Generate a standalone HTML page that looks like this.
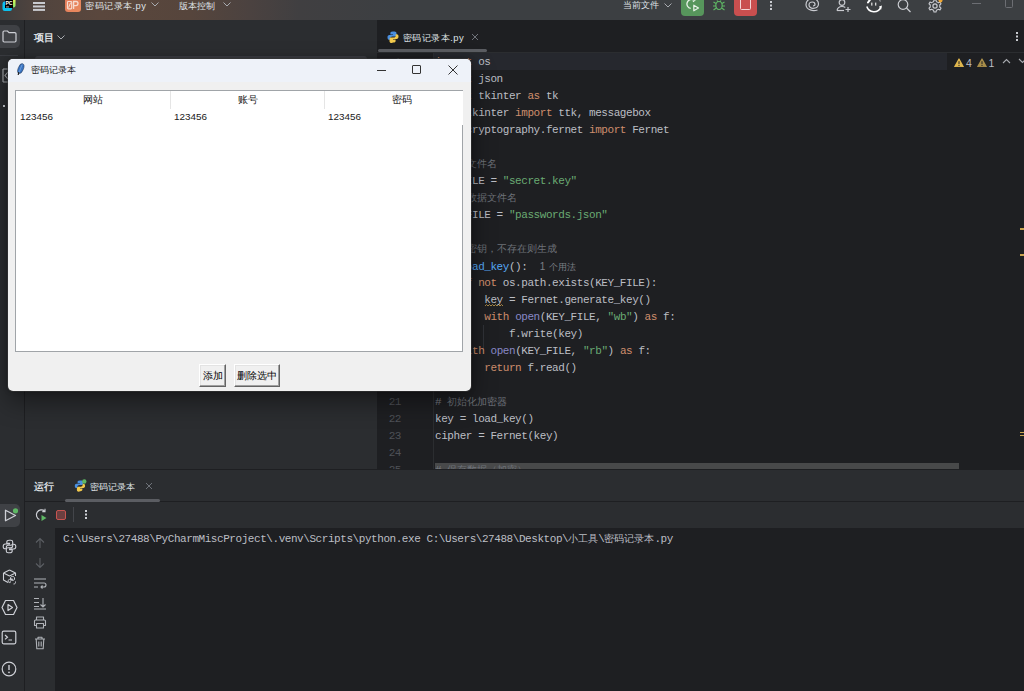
<!DOCTYPE html>
<html><head><meta charset="utf-8">
<style>
*{box-sizing:border-box;margin:0;padding:0}
html,body{width:1024px;height:691px;overflow:hidden;background:#1e1f22;font-family:"Liberation Sans",sans-serif;}
.a{position:absolute}
#title{left:0;top:0;width:1024px;height:20px;background:linear-gradient(90deg,#3e3d3e 0px,#50443e 35px,#5a473d 100px,#56453c 190px,#4b4240 250px,#403f41 300px,#3c3f42 400px);}
#lstrip{left:0;top:20px;width:25px;height:671px;background:#2b2d30;border-right:1px solid #1e1f22}
#proj{left:25px;top:20px;width:352px;height:449px;background:#2b2d30;}
#editor{left:377px;top:20px;width:647px;height:449px;background:#1e1f22;}
#run{left:25px;top:469px;width:999px;height:222px;background:#2b2d30;border-top:1px solid #1e1f22}
#console{left:55px;top:528px;width:969px;height:163px;background:#1e1f22}
.code{position:absolute;font-family:"Liberation Mono",monospace;font-size:11px;letter-spacing:-0.44px;color:#bcbec4;white-space:pre;line-height:17px;height:17px}
.z{font-size:9.6px;letter-spacing:0}
.k{color:#cf8e6d}.s{color:#6aab73}.c{color:#7a7e85}.c .z{color:#6d7178}.f{color:#56a8f5}.b{color:#8888c6}.h{color:#7a7e85}
.ln{position:absolute;font-family:"Liberation Mono",monospace;font-size:11px;letter-spacing:-0.44px;color:#4e5157;line-height:17px;text-align:right;width:30px;left:371px}
#tk{left:8px;top:59px;width:463px;height:332px;background:#f0f0f0;border-radius:5px;box-shadow:0 0 0 1px rgba(60,60,60,.5), 0 10px 26px rgba(0,0,0,.45), 0 0 5px rgba(0,0,0,.35);overflow:hidden}
#tktitle{left:0;top:0;width:463px;height:23px;background:#eef2f9}
.ui{font-family:"Liberation Sans",sans-serif;font-size:11px;color:#dfe1e5;white-space:nowrap;position:absolute}
.btn{background:#f0f0f0;border-top:1px solid #fff;border-left:1px solid #fff;border-right:1px solid #646464;border-bottom:1px solid #646464;box-shadow:inset -1px -1px 0 #a0a0a0, inset 1px 1px 0 #e3e3e3;font-size:9.8px;color:#000;text-align:center;line-height:22px;white-space:nowrap}
</style></head><body>
<div id="title" class="a"></div>
<!-- title bar content -->
<svg class="a" style="left:2px;top:-2px" width="14" height="14" viewBox="0 0 14 14">
  <defs><linearGradient id="gy" x1="0" y1="1" x2="1" y2="0"><stop offset="0" stop-color="#21d789"/><stop offset="1" stop-color="#fcf84a"/></linearGradient></defs>
  <rect x="0.5" y="3.5" width="9.5" height="9.5" rx="2.2" fill="#0ac2ef"/>
  <rect x="4" y="0" width="9.5" height="9.5" rx="2" fill="url(#gy)"/>
  <rect x="3" y="2" width="8" height="8" fill="#000"/>
  <text x="3.6" y="7.2" font-size="5.2" font-family="Liberation Sans" font-weight="bold" fill="#fff" letter-spacing="-0.4">PC</text>
  <rect x="4" y="8.6" width="3" height="0.7" fill="#fff"/>
</svg>
<div class="a" style="left:33px;top:2.2px;width:12px;height:1.4px;background:#c9cbd0;box-shadow:0 3.45px 0 #c9cbd0,0 6.9px 0 #c9cbd0"></div>
<div class="a" style="left:65px;top:-4px;width:15.5px;height:16.2px;border-radius:3px;background:linear-gradient(135deg,#e47a5a,#e98a5e)"></div>
<svg class="a" style="left:65px;top:0" width="15" height="11" viewBox="0 0 15 11"><rect x="2.5" y="1.5" width="4.2" height="7.3" rx="0.8" stroke="#f6dbcf" stroke-width="1.2" fill="none"/><path d="M5.6 2.6L3.6 7.6" stroke="#f6dbcf" stroke-width="1"/><path d="M8.6 9V1.5H11C12.3 1.5 13 2.3 13 3.6C13 4.9 12.3 5.7 11 5.7H8.6" stroke="#f6dbcf" stroke-width="1.3" fill="none"/></svg>
<div class="ui" style="left:85px;top:0px;font-size:9.4px;letter-spacing:0.5px;color:#dfe1e5;line-height:11px">密码记录本.py</div>
<svg class="a" style="left:151px;top:2px" width="8" height="5" viewBox="0 0 8 5"><path d="M0.5 0.5L4 4L7.5 0.5" stroke="#a8abb0" fill="none" stroke-width="1"/></svg>
<div class="ui" style="left:179px;top:0px;font-size:9.4px;color:#dfe1e5;line-height:11px">版本控制</div>
<svg class="a" style="left:223px;top:2px" width="8" height="5" viewBox="0 0 8 5"><path d="M0.5 0.5L4 4L7.5 0.5" stroke="#a8abb0" fill="none" stroke-width="1"/></svg>
<div class="ui" style="left:623px;top:0px;font-size:9px;color:#dfe1e5;line-height:11px">当前文件</div>
<svg class="a" style="left:664px;top:3px" width="8" height="5" viewBox="0 0 8 5"><path d="M0.5 0.5L4 4L7.5 0.5" stroke="#a8abb0" fill="none" stroke-width="1"/></svg>
<div class="a" style="left:681px;top:-4px;width:23px;height:20px;border-radius:4px;background:#57965c"></div>
<svg class="a" style="left:686px;top:-2px" width="14" height="14" viewBox="0 0 14 14"><path d="M7.75 2.1A4.5 4.5 0 1 0 4.7 10.4" stroke="#e8f2e8" fill="none" stroke-width="1.3"/><path d="M6.8 0.3L9 2L7 3.8" stroke="#e8f2e8" fill="none" stroke-width="1.2"/><path d="M7.8 7.2L12.5 10L7.8 12.8z" stroke="#e8f2e8" fill="none" stroke-width="1.2" stroke-linejoin="round"/></svg>
<svg class="a" style="left:712px;top:-2px" width="14" height="14" viewBox="0 0 14 14"><ellipse cx="7" cy="7.5" rx="3.2" ry="4" stroke="#5fb865" fill="none" stroke-width="1.2"/><path d="M1.5 4L4 5.5M12.5 4L10 5.5M1 8H3.8M13 8H10.2M1.5 12L4 10.2M12.5 12L10 10.2M5 2.5L6 3.8M9 2.5L8 3.8" stroke="#5fb865" stroke-width="1.1"/></svg>
<div class="a" style="left:734px;top:-4px;width:23px;height:20px;border-radius:4px;background:#c94f4f"></div>
<div class="a" style="left:740px;top:-2px;width:10.5px;height:11.7px;border:1.1px solid #f3d6d6;border-radius:1.5px"></div>
<div class="a" style="left:770px;top:1px;width:2px;height:2px;background:#c9cbd0;box-shadow:0 3.5px 0 #c9cbd0,0 7px 0 #c9cbd0"></div>
<svg class="a" style="left:805px;top:-3px" width="15" height="15" viewBox="0 0 15 15"><path d="M12.5 13C8 14.5 1.5 13 1 8C0.8 3.5 4.5 1.5 7.5 1.5C11 1.5 13.5 4 13.5 7C13.5 10 11 11.3 8 11.3C5.5 11.3 4 9.5 4 8C4 6 5.5 5 7.3 5C9 5 10 6.2 10 7.5C10 8.5 9 9 8 8.8" stroke="#c9cbd0" fill="none" stroke-width="1.2"/></svg>
<svg class="a" style="left:836px;top:-1px" width="16" height="13" viewBox="0 0 16 13"><circle cx="6" cy="3.5" r="2.8" stroke="#c9cbd0" fill="none" stroke-width="1.2"/><path d="M1 11.5C1.5 8.5 3.5 7.5 6 7.5C7.5 7.5 8.5 7.8 9.3 8.4" stroke="#c9cbd0" fill="none" stroke-width="1.2"/><path d="M1 11.5H8" stroke="#c9cbd0" stroke-width="1.2"/><path d="M12 8V13M9.5 10.5H14.5" stroke="#c9cbd0" stroke-width="1.2"/></svg>
<svg class="a" style="left:865px;top:-4px" width="18" height="18" viewBox="0 0 18 18"><path d="M1.8 10.5A7.5 7.5 0 0 0 15.8 11.2" stroke="#fff" fill="none" stroke-width="1.6"/><path d="M14 10.5L17 9.5L16 14z" fill="#fff"/><path d="M3 6.5L5.2 3.5" stroke="#fff" stroke-width="2" stroke-linecap="round"/><path d="M14.5 4L15.5 5.5" stroke="#9a9c9f" stroke-width="1.2"/><rect x="6.2" y="6.6" width="1.2" height="3" fill="#e8e8e8"/><rect x="10.1" y="6.6" width="1.2" height="3" fill="#e8e8e8"/></svg>
<svg class="a" style="left:897px;top:-1px" width="15" height="14" viewBox="0 0 15 14"><circle cx="6" cy="5.5" r="4.8" stroke="#c9cbd0" fill="none" stroke-width="1.2"/><path d="M9.5 9L13.5 13" stroke="#c9cbd0" stroke-width="1.3"/></svg>
<svg class="a" style="left:928px;top:-1px" width="16" height="14" viewBox="0 0 16 14"><path d="M7 0.8L8.6 1.2L9 3L10.6 3.8L12.2 3L13.2 4.3L12.6 6L13 7.8L14.6 8.6L14.3 10.3L12.6 10.8L11.6 12.2L12 13.8" stroke="#c9cbd0" fill="none" stroke-width="0"/><circle cx="7" cy="7" r="2.1" stroke="#c9cbd0" fill="none" stroke-width="1.2"/><path d="M6 0.8H8L8.5 2.6L10.2 3.4L11.9 2.5L13.3 3.9L12.4 5.6L13.1 7.3L14.8 7.9V9.9L13 10.4L12.3 12.1L13.2 13.8" stroke="#c9cbd0" fill="none" stroke-width="0"/><path d="M6 1H8L8.4 2.7A4.5 4.5 0 0 1 10.4 3.8L12 3.1L13 4.8L11.7 6A4.5 4.5 0 0 1 11.7 8L13 9.2L12 10.9L10.4 10.2A4.5 4.5 0 0 1 8.4 11.3L8 13H6L5.6 11.3A4.5 4.5 0 0 1 3.6 10.2L2 10.9L1 9.2L2.3 8A4.5 4.5 0 0 1 2.3 6L1 4.8L2 3.1L3.6 3.8A4.5 4.5 0 0 1 5.6 2.7z" stroke="#c9cbd0" fill="none" stroke-width="1.1" stroke-linejoin="round"/><circle cx="12.5" cy="1.5" r="2" fill="#f0a732"/></svg>
<div class="a" style="left:972px;top:3px;width:9px;height:1px;background:#6c6e73"></div>
<div class="a" style="left:1005px;top:-2px;width:8px;height:10px;border:1px solid #6c6e73;border-radius:1.5px"></div>

<div id="lstrip" class="a"></div>
<div id="proj" class="a"></div>
<!-- left strip top -->
<div class="a" style="left:-4px;top:25px;width:24px;height:22.5px;border-radius:5px;background:#3f4145"></div>
<svg class="a" style="left:1.5px;top:30px" width="15" height="13" viewBox="0 0 15 13"><path d="M1 2.2C1 1.5 1.5 1 2.2 1H5.5L7 2.6H12.8C13.5 2.6 14 3.1 14 3.8V10.8C14 11.5 13.5 12 12.8 12H2.2C1.5 12 1 11.5 1 10.8z" stroke="#ced0d6" fill="none" stroke-width="1.2"/></svg>
<div class="a" style="left:0;top:55px;width:18px;height:1px;background:#393b40"></div>
<!-- project header -->
<div class="ui" style="left:34px;top:32px;font-size:10px;font-weight:bold;color:#dfe1e5;line-height:11px">项目</div>
<svg class="a" style="left:57px;top:35px" width="8" height="5" viewBox="0 0 8 5"><path d="M0.5 0.5L4 4L7.5 0.5" stroke="#a8abb0" fill="none" stroke-width="1"/></svg>
<div class="a" style="left:35px;top:55.5px;width:332px;height:8px;border-radius:3px;background:#3c3e43"></div>
<!-- left strip icons partially behind tk -->
<svg class="a" style="left:2px;top:68px" width="7" height="15" viewBox="0 0 7 15"><path d="M1 1V14M1 1H6M1 14H6M6 4L3 7.5L6 11" stroke="#a8abb0" stroke-width="1.1" fill="none"/></svg>
<div class="a" style="left:3px;top:105px;width:2px;height:2px;background:#ced0d6"></div>
<!-- left strip bottom icons -->
<div class="a" style="left:-4px;top:504px;width:24px;height:23px;border-radius:5px;background:#3f4145"></div>
<svg class="a" style="left:3px;top:508px" width="16" height="15" viewBox="0 0 16 15"><path d="M2.5 2.2L12.5 7.5L2.5 12.8z" stroke="#ced0d6" fill="none" stroke-width="1.3" stroke-linejoin="round"/><circle cx="12.5" cy="2.8" r="2.6" fill="#5fb865"/></svg>
<svg class="a" style="left:2px;top:539px" width="15" height="15" viewBox="0 0 15 15"><path d="M7.3 1.2C5 1.2 4.8 2.1 4.8 3V4.4H7.5V5H3.2C2 5 1.2 5.9 1.2 7.4C1.2 9 2 9.8 3.2 9.8H4.3V8.3C4.3 7.2 5.2 6.3 6.3 6.3H9C10 6.3 10.7 5.6 10.7 4.6V3C10.7 2 9.8 1.2 8.8 1.2z" stroke="#ced0d6" fill="none" stroke-width="1.1"/><path d="M7.7 13.8C10 13.8 10.2 12.9 10.2 12V10.6H7.5V10H11.8C13 10 13.8 9.1 13.8 7.6C13.8 6 13 5.2 11.8 5.2H10.7V6.7C10.7 7.8 9.8 8.7 8.7 8.7H6C5 8.7 4.3 9.4 4.3 10.4V12C4.3 13 5.2 13.8 6.2 13.8z" stroke="#ced0d6" fill="none" stroke-width="1.1"/></svg>
<svg class="a" style="left:2px;top:569px" width="16" height="16" viewBox="0 0 16 16"><path d="M7.5 1L13.5 4V7M1.5 4L7.5 1M1.5 4V11L6 13.5M1.5 4L7.5 7L13.5 4" stroke="#ced0d6" fill="none" stroke-width="1.1" stroke-linejoin="round"/><path d="M10.5 7.5C8.8 7.5 8.5 8.3 8.5 9V10H10.5V10.4H7.5C6.7 10.4 6.2 11 6.2 12C6.2 13 6.7 13.6 7.5 13.6H8.2V12.6C8.2 11.9 8.8 11.3 9.5 11.3H11.4C12 11.3 12.5 10.8 12.5 10.2V9C12.5 8.3 11.8 7.5 11 7.5z M11.5 15C13.2 15 13.5 14.2 13.5 13.5V12.5" stroke="#ced0d6" fill="none" stroke-width="1"/></svg>
<svg class="a" style="left:1px;top:599px" width="17" height="17" viewBox="0 0 17 17"><path d="M4.5 1.5H12.5L16 8.5L12.5 15.5H4.5L1 8.5z" stroke="#ced0d6" fill="none" stroke-width="1.2" stroke-linejoin="round"/><path d="M7 5.5L11.5 8.5L7 11.5z" stroke="#ced0d6" fill="none" stroke-width="1.2" stroke-linejoin="round"/></svg>
<svg class="a" style="left:1px;top:630px" width="16" height="15" viewBox="0 0 16 15"><rect x="1.2" y="1.2" width="13.6" height="12.6" rx="1.5" stroke="#ced0d6" fill="none" stroke-width="1.2"/><path d="M4 5L6.5 7.2L4 9.4M7.5 10H11" stroke="#ced0d6" fill="none" stroke-width="1.2"/></svg>
<svg class="a" style="left:1px;top:661px" width="16" height="16" viewBox="0 0 16 16"><circle cx="8" cy="8" r="6.8" stroke="#ced0d6" fill="none" stroke-width="1.2"/><path d="M8 4V9" stroke="#ced0d6" stroke-width="1.4"/><circle cx="8" cy="11.3" r="0.9" fill="#ced0d6"/></svg>

<div id="editor" class="a">
  <div class="a" style="left:0;top:32px;width:647px;height:1px;background:#2b2d30"></div>
</div>
<!-- current line -->
<div class="a" style="left:434px;top:53px;width:513px;height:17px;background:#26282e"></div>
<!-- gutter line -->
<div class="a" style="left:433px;top:53px;width:1px;height:417px;background:#2b2d30"></div>
<!-- editor tab -->
<svg class="a" style="left:387px;top:31px" width="12" height="12" viewBox="0 0 12 12">
  <path d="M5.8 0.5C3.6 0.5 3.4 1.4 3.4 2.3V3.6H6V4.1H2.3C1.2 4.1 0.5 5 0.5 6.4c0 1.5 0.7 2.3 1.8 2.3H3.3V7.3c0-1 .9-1.9 2-1.9h2.6c.9 0 1.6-.7 1.6-1.6V2.3C9.5 1.3 8.6.5 7.6.5z" fill="#4a8fe0"/>
  <path d="M6.2 11.5c2.2 0 2.4-.9 2.4-1.8V8.4H6V7.9h3.7c1.1 0 1.8-.9 1.8-2.3 0-1.5-.7-2.3-1.8-2.3H8.7v1.4c0 1-.9 1.9-2 1.9H4.1c-.9 0-1.6.7-1.6 1.6v2.1c0 1 .9 1.8 1.9 1.8z" fill="#f2c94c"/>
</svg>
<div class="ui" style="left:403px;top:32px;font-size:9.4px;letter-spacing:0.45px;color:#dfe1e5;line-height:12px">密码记录本.py</div>
<svg class="a" style="left:471px;top:33px" width="8" height="8" viewBox="0 0 8 8"><path d="M1 1L7 7M7 1L1 7" stroke="#6f737a" stroke-width="1"/></svg>
<div class="a" style="left:378px;top:49px;width:109px;height:3px;background:#5b5d62;border-radius:1.5px"></div>
<!-- editor more dots -->
<div class="a" style="left:1016px;top:32px;width:2px;height:2px;background:#c8cacf;box-shadow:0 3.5px 0 #c8cacf,0 7px 0 #c8cacf"></div>
<!-- inspection widget -->
<div class="a" style="left:947px;top:53px;width:77px;height:18px;background:#1e1f22"></div>
<svg class="a" style="left:954px;top:57.5px" width="10" height="9.5" viewBox="0 0 10 9.5"><path d="M5 1L9.3 8.8H0.7z" fill="#e0b74e" stroke="#e0b74e" stroke-width="1.2" stroke-linejoin="round"/><rect x="4.5" y="3.2" width="1" height="3" fill="#1e1f22"/><rect x="4.5" y="7" width="1" height="1" fill="#1e1f22"/></svg>
<div class="ui" style="left:966px;top:56.5px;font-size:10.5px;color:#bcbec4;line-height:12px">4</div>
<svg class="a" style="left:977px;top:57.5px" width="10" height="9.5" viewBox="0 0 10 9.5"><path d="M5 1L9.3 8.8H0.7z" fill="#a98e4a" stroke="#a98e4a" stroke-width="1.2" stroke-linejoin="round"/><rect x="4.5" y="3.2" width="1" height="3" fill="#1e1f22"/><rect x="4.5" y="7" width="1" height="1" fill="#1e1f22"/></svg>
<div class="ui" style="left:988.5px;top:56.5px;font-size:10.5px;color:#bcbec4;line-height:12px">1</div>
<svg class="a" style="left:1002px;top:58px" width="9" height="6" viewBox="0 0 9 6"><path d="M1 5L4.5 1.5L8 5" stroke="#a8abb0" fill="none" stroke-width="1.1"/></svg>
<svg class="a" style="left:1018px;top:58px" width="9" height="6" viewBox="0 0 9 6"><path d="M1 1L4.5 4.5L8 1" stroke="#a8abb0" fill="none" stroke-width="1.1"/></svg>
<!-- horizontal scrollbar -->
<div class="a" style="left:435px;top:462.5px;width:524px;height:7px;background:#48494a"></div>
<div class="a" style="left:483px;top:325px;width:1px;height:26px;background:#313338"></div>
<svg class="a" style="left:485px;top:304px" width="19" height="3" viewBox="0 0 19 3"><path d="M0 2L1.5 0.5L3 2L4.5 0.5L6 2L7.5 0.5L9 2L10.5 0.5L12 2L13.5 0.5L15 2L16.5 0.5L18 2" stroke="#c9a24f" stroke-width="0.8" fill="none"/></svg>
<div id="code">
<div class="code" style="left:435px;top:53.5px"><span class="k">import</span> os</div>
<div class="code" style="left:435px;top:70.5px"><span class="k">import</span> json</div>
<div class="code" style="left:435px;top:87.5px"><span class="k">import</span> tkinter <span class="k">as</span> tk</div>
<div class="code" style="left:435px;top:104.5px"><span class="k">from</span> tkinter <span class="k">import</span> ttk, messagebox</div>
<div class="code" style="left:435px;top:121.5px"><span class="k">from</span> cryptography.fernet <span class="k">import</span> Fernet</div>
<div class="code" style="left:435px;top:138.5px"></div>
<div class="code" style="left:435px;top:155.5px"><span class="c"># <span class="z">密钥文件名</span></span></div>
<div class="code" style="left:435px;top:172.5px">KEY_FILE = <span class="s">"secret.key"</span></div>
<div class="code" style="left:435px;top:189.5px"><span class="c"># <span class="z">密码数据文件名</span></span></div>
<div class="code" style="left:435px;top:206.5px">DATA_FILE = <span class="s">"passwords.json"</span></div>
<div class="code" style="left:435px;top:223.5px"></div>
<div class="code" style="left:435px;top:240.5px"><span class="c"># <span class="z">加载密钥，不存在则生成</span></span></div>
<div class="code" style="left:435px;top:257.5px"><span class="k">def</span> <span class="f">load_key</span>():  <span class="h" style="font-family:Liberation Sans;font-size:10px;letter-spacing:0">1 <span style="font-size:9px;margin-left:0.5px">个用法</span></span></div>
<div class="code" style="left:435px;top:274.5px">    <span class="k">if not</span> os.path.exists(KEY_FILE):</div>
<div class="code" style="left:435px;top:291.5px">        <span class="w">key</span> = Fernet.generate_key()</div>
<div class="code" style="left:435px;top:308.5px">        <span class="k">with</span> <span class="b">open</span>(KEY_FILE, <span class="s">"wb"</span>) <span class="k">as</span> f:</div>
<div class="code" style="left:435px;top:325.5px">            f.write(key)</div>
<div class="code" style="left:435px;top:342.5px">    <span class="k">with</span> <span class="b">open</span>(KEY_FILE, <span class="s">"rb"</span>) <span class="k">as</span> f:</div>
<div class="code" style="left:435px;top:359.5px">        <span class="k">return</span> f.read()</div>
<div class="code" style="left:435px;top:376.5px"></div>
<div class="code" style="left:435px;top:393.5px"><span class="c"># <span class="z">初始化加密器</span></span></div>
<div class="code" style="left:435px;top:410.5px">key = load_key()</div>
<div class="code" style="left:435px;top:427.5px">cipher = Fernet(key)</div>
<div class="code" style="left:435px;top:444.5px"></div>
<div class="code" style="left:435px;top:461.5px"><span class="c"># <span class="z">保存数据（加密）</span></span></div>
<div class="ln" style="top:53.5px">1</div>
<div class="ln" style="top:70.5px">2</div>
<div class="ln" style="top:87.5px">3</div>
<div class="ln" style="top:104.5px">4</div>
<div class="ln" style="top:121.5px">5</div>
<div class="ln" style="top:138.5px">6</div>
<div class="ln" style="top:155.5px">7</div>
<div class="ln" style="top:172.5px">8</div>
<div class="ln" style="top:189.5px">9</div>
<div class="ln" style="top:206.5px">10</div>
<div class="ln" style="top:223.5px">11</div>
<div class="ln" style="top:240.5px">12</div>
<div class="ln" style="top:257.5px">13</div>
<div class="ln" style="top:274.5px">14</div>
<div class="ln" style="top:291.5px">15</div>
<div class="ln" style="top:308.5px">16</div>
<div class="ln" style="top:325.5px">17</div>
<div class="ln" style="top:342.5px">18</div>
<div class="ln" style="top:359.5px">19</div>
<div class="ln" style="top:376.5px">20</div>
<div class="ln" style="top:393.5px">21</div>
<div class="ln" style="top:410.5px">22</div>
<div class="ln" style="top:427.5px">23</div>
<div class="ln" style="top:444.5px">24</div>
<div class="ln" style="top:461.5px">25</div>
</div>

<!-- scrollbar and markers -->
<div class="a" style="left:1020px;top:228px;width:4px;height:2px;background:#c9a24f"></div>
<div class="a" style="left:1020px;top:254px;width:4px;height:2px;background:#c9a24f"></div>
<div class="a" style="left:1020px;top:432px;width:4px;height:1px;background:#c9a24f"></div>
<div class="a" style="left:1020px;top:435px;width:4px;height:1px;background:#c9a24f"></div>
<div id="run" class="a"></div>
<div id="console" class="a"></div>
<!-- run header -->
<div class="a" style="left:25px;top:501px;width:999px;height:1px;background:#1e1f22"></div>
<div class="ui" style="left:34px;top:481px;font-size:9.8px;font-weight:bold;color:#dfe1e5;line-height:11px">运行</div>
<svg class="a" style="left:74px;top:479px" width="13" height="13" viewBox="0 0 13 13"><path d="M5.8 1.5C3.8 1.5 3.6 2.3 3.6 3.1V4.3H6V4.8H2.5C1.5 4.8 0.8 5.6 0.8 6.9c0 1.4.7 2.1 1.7 2.1H3.4V7.8c0-.9.8-1.7 1.8-1.7h2.4c.8 0 1.5-.6 1.5-1.5V3.1c0-.9-.8-1.6-1.7-1.6z" fill="#4a8fe0"/><path d="M6.2 12.2c2 0 2.2-.8 2.2-1.6V9.4H6V8.9h3.4c1 0 1.7-.8 1.7-2.1 0-1.4-.7-2.1-1.7-2.1H8.6v1.3c0 .9-.8 1.7-1.8 1.7H4.4c-.8 0-1.5.6-1.5 1.5v1.9c0 .9.8 1.7 1.7 1.7z" fill="#f2c94c"/><circle cx="10.3" cy="2.5" r="2.2" fill="#5fb865"/></svg>
<div class="ui" style="left:90px;top:481px;font-size:9.4px;color:#dfe1e5;line-height:11px">密码记录本</div>
<svg class="a" style="left:145px;top:482px" width="8" height="8" viewBox="0 0 8 8"><path d="M1 1L7 7M7 1L1 7" stroke="#6f737a" stroke-width="1"/></svg>
<div class="a" style="left:65px;top:499px;width:95px;height:3px;background:#5b5d62;border-radius:1.5px"></div>
<!-- run toolbar -->
<svg class="a" style="left:34px;top:508px" width="14" height="14" viewBox="0 0 14 14"><path d="M10.8 3.2A5 5 0 1 0 5.5 11.5" stroke="#ced0d6" fill="none" stroke-width="1.2"/><path d="M11 0.8V3.6H8.3" stroke="#ced0d6" fill="none" stroke-width="1.1"/><path d="M7.5 7L12.5 10L7.5 13z" fill="#5fb865"/></svg>
<div class="a" style="left:56px;top:510px;width:10px;height:10px;border-radius:2px;background:#6b3f40;border:1.2px solid #c75450"></div>
<div class="a" style="left:73px;top:507px;width:1px;height:15px;background:#43454a"></div>
<div class="a" style="left:85px;top:510px;width:2px;height:2px;background:#ced0d6;box-shadow:0 3.5px 0 #ced0d6,0 7px 0 #ced0d6"></div>
<!-- console side icons -->
<svg class="a" style="left:34px;top:537px" width="12" height="12" viewBox="0 0 12 12"><path d="M6 11V1.5M2 5.5L6 1.5L10 5.5" stroke="#5b5e63" fill="none" stroke-width="1.1"/></svg>
<svg class="a" style="left:34px;top:557px" width="12" height="12" viewBox="0 0 12 12"><path d="M6 1V10.5M2 6.5L6 10.5L10 6.5" stroke="#5b5e63" fill="none" stroke-width="1.1"/></svg>
<svg class="a" style="left:33px;top:577px" width="14" height="12" viewBox="0 0 14 12"><path d="M1 2H13M1 6H11C12.3 6 13 6.8 13 8C13 9.2 12.3 10 11 10H8M9.5 8.5L8 10L9.5 11.5M1 10H5" stroke="#b0b3b8" fill="none" stroke-width="1.1"/></svg>
<svg class="a" style="left:33px;top:597px" width="14" height="13" viewBox="0 0 14 13"><path d="M1 1.5H6M1 5.5H6M1 9.5H6M1 12H13M10 1V10M7.5 7.5L10 10L12.5 7.5" stroke="#b0b3b8" fill="none" stroke-width="1.1"/></svg>
<svg class="a" style="left:33px;top:616px" width="14" height="13" viewBox="0 0 14 13"><path d="M3.5 4V1H10.5V4M3.5 9.5H1.5V5C1.5 4.4 1.9 4 2.5 4H11.5C12.1 4 12.5 4.4 12.5 5V9.5H10.5M3.5 7.5H10.5V12H3.5z" stroke="#b0b3b8" fill="none" stroke-width="1.1" stroke-linejoin="round"/></svg>
<svg class="a" style="left:34px;top:636px" width="12" height="14" viewBox="0 0 12 14"><path d="M1 3H11M4 3V1.2H8V3M2.2 3L2.8 12.8H9.2L9.8 3M4.8 5.5V10.5M7.2 5.5V10.5" stroke="#b0b3b8" fill="none" stroke-width="1.1" stroke-linejoin="round"/></svg>

<div class="code" style="left:63px;top:530.5px;color:#bcbec4">C:\Users\27488\PyCharmMiscProject\.venv\Scripts\python.exe C:\Users\27488\Desktop\<span class="z" style="font-size:9.9px">小工具</span>\<span class="z" style="font-size:9.9px">密码记录本</span>.py</div>

<div id="tk" class="a">
  <div id="tktitle" class="a"></div>
  <svg class="a" style="left:8px;top:4px" width="9" height="13" viewBox="0 0 9 13"><ellipse cx="4.8" cy="5.6" rx="2.6" ry="5.2" transform="rotate(22 4.8 5.6)" fill="#3a75c4" stroke="#22334d" stroke-width="0.5"/><path d="M6.2 1.5C5 4 4 7 3 10" stroke="#8fb8ea" stroke-width="0.6" fill="none"/><path d="M2.8 9L2.2 12" stroke="#222" stroke-width="1.2"/></svg>
  <div class="ui" style="left:23px;top:6px;font-size:9.3px;color:#1a1a1a;line-height:11px">密码记录本</div>
  <div class="a" style="left:369px;top:11px;width:9px;height:1px;background:#333"></div>
  <div class="a" style="left:404px;top:6px;width:9px;height:9px;border:1px solid #333;border-radius:1px"></div>
  <svg class="a" style="left:440px;top:6px" width="10" height="10" viewBox="0 0 10 10"><path d="M0.5 0.5L9.5 9.5M9.5 0.5L0.5 9.5" stroke="#333" stroke-width="1"/></svg>
  <!-- treeview -->
  <div class="a" style="left:7px;top:31px;width:448px;height:262px;background:#fff;border:1px solid #a0a4a8;border-right:none"></div>
  <div class="a" style="left:454px;top:66px;width:1px;height:227px;background:#a0a4a8"></div>
  <div class="a" style="left:7px;top:292px;width:448px;height:1px;background:#a0a4a8"></div>
  <div class="a" style="left:162px;top:32px;width:1px;height:18px;background:#e5e5e5"></div>
  <div class="a" style="left:316px;top:32px;width:1px;height:18px;background:#e5e5e5"></div>
  <div class="ui" style="left:8px;top:35px;width:154px;text-align:center;font-size:10px;color:#1a1a1a;line-height:11px">网站</div>
  <div class="ui" style="left:163px;top:35px;width:154px;text-align:center;font-size:10px;color:#1a1a1a;line-height:11px">账号</div>
  <div class="ui" style="left:317px;top:35px;width:154px;text-align:center;font-size:10px;color:#1a1a1a;line-height:11px">密码</div>
  <div class="ui" style="left:12px;top:51.5px;font-size:9.9px;color:#1a1a1a;line-height:11px">123456</div>
  <div class="ui" style="left:166px;top:51.5px;font-size:9.9px;color:#1a1a1a;line-height:11px">123456</div>
  <div class="ui" style="left:320px;top:51.5px;font-size:9.9px;color:#1a1a1a;line-height:11px">123456</div>
  <!-- buttons -->
  <div class="a btn" style="left:191px;top:305px;width:27px;height:23px"><span>添加</span></div>
  <div class="a btn" style="left:226px;top:305px;width:46px;height:23px"><span>删除选中</span></div>
</div>
</body></html>
